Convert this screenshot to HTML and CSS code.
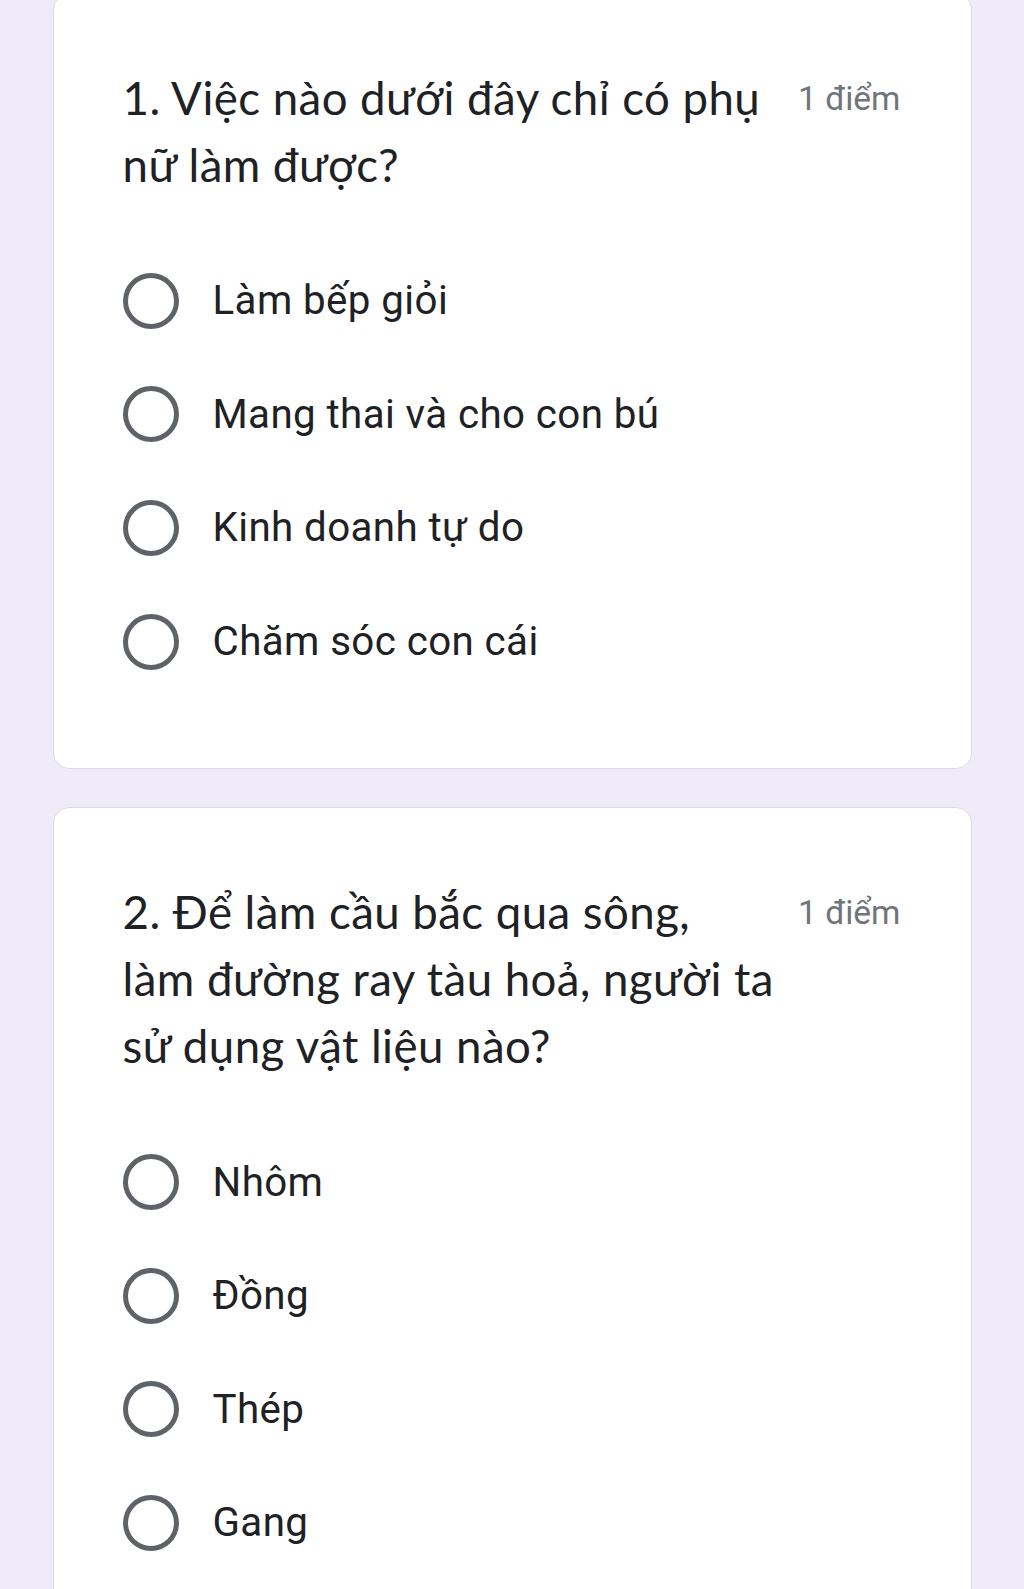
FILE: index.html
```html
<!DOCTYPE html>
<html lang="vi">
<head>
<meta charset="utf-8">
<title>Quiz</title>
<link rel="stylesheet" href="styles.css">
</head>
<body>
<main class="form">
  <section class="card card-first">
    <div class="q-head">
      <div class="q-title">1. Việc nào dưới đây chỉ có phụ<br>nữ làm được?</div>
      <div class="q-points">1 điểm</div>
    </div>
    <div class="options">
      <label class="option"><span class="radio"></span><span class="opt-text">Làm bếp giỏi</span></label>
      <label class="option"><span class="radio"></span><span class="opt-text">Mang thai và cho con bú</span></label>
      <label class="option"><span class="radio"></span><span class="opt-text">Kinh doanh tự do</span></label>
      <label class="option"><span class="radio"></span><span class="opt-text">Chăm sóc con cái</span></label>
    </div>
  </section>
  <section class="card">
    <div class="q-head">
      <div class="q-title">2. Để làm cầu bắc qua sông,<br>làm đường ray tàu hoả, người ta<br>sử dụng vật liệu nào?</div>
      <div class="q-points">1 điểm</div>
    </div>
    <div class="options">
      <label class="option"><span class="radio"></span><span class="opt-text">Nhôm</span></label>
      <label class="option"><span class="radio"></span><span class="opt-text">Đồng</span></label>
      <label class="option"><span class="radio"></span><span class="opt-text">Thép</span></label>
      <label class="option"><span class="radio"></span><span class="opt-text">Gang</span></label>
    </div>
  </section>
</main>
</body>
</html>
```

FILE: styles.css
```css
html, body {
  margin: 0;
  padding: 0;
  background: #f0ebf8;
}
body {
  font-family: Roboto, "Liberation Sans", sans-serif;
  color: #202124;
  overflow: hidden;
  height: 1589px;
}
.form {
  width: 919px;
  margin: 0 auto;
  display: flex;
  flex-direction: column;
  gap: 38px;
}
.card {
  background: #ffffff;
  border: 1.5px solid #dadce0;
  border-radius: 16px;
  padding: 70px 70px 70px 67px;
}
.card-first {
  margin-top: -7px;
}
.q-head {
  display: flex;
  align-items: flex-start;
}
.q-title {
  flex: 1;
  min-width: 0;
  font-family: Lato, "Open Sans", sans-serif;
  font-size: 45.6px;
  letter-spacing: 0.45px;
  line-height: 67px;
  color: #202124;
  padding-left: 2px;
  white-space: nowrap;
}
.q-points {
  flex: none;
  margin-left: 17px;
  padding-top: 1px;
  font-family: Roboto, sans-serif;
  font-size: 33.5px;
  line-height: 67px;
  color: #70757a;
  white-space: nowrap;
}
.options {
  margin-top: 46px;
  display: flex;
  flex-direction: column;
}
.option {
  height: 113.6px;
  display: flex;
  align-items: center;
  gap: 34px;
}
.radio {
  box-sizing: border-box;
  width: 56px;
  height: 56px;
  margin-left: 2px;
  border: 5.6px solid #5f6368;
  border-radius: 50%;
  flex: none;
}
.opt-text {
  font-family: Roboto, sans-serif;
  font-size: 40.3px;
  letter-spacing: 0.4px;
  color: #202124;
}
```
